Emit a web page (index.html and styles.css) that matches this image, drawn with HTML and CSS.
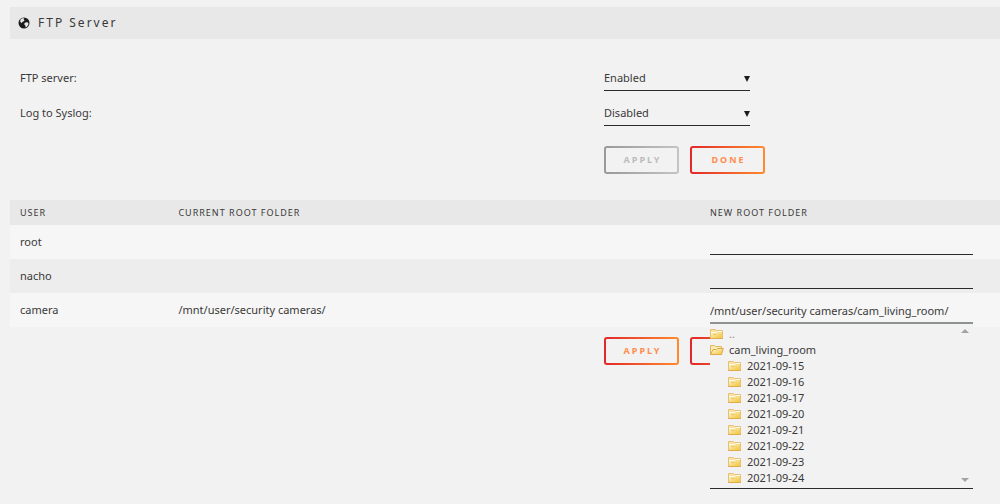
FILE: index.html
```html
<!DOCTYPE html>
<html lang="en">
<head>
    <meta charset="UTF-8">
    <meta name="viewport" content="width=device-width, initial-scale=1.0">
    <title>FTP Server</title>
    <link rel="stylesheet" href="styles.css">
</head>
<body>
    <svg class="sprites" aria-hidden="true">
        <defs>
            <linearGradient id="folderFill" x1="0" y1="0" x2="1" y2="1">
                <stop offset="0" stop-color="#fff6d0"/>
                <stop offset="1" stop-color="#f0c63c"/>
            </linearGradient>
        </defs>
        <symbol id="folder" viewBox="0 0 14 12">
            <path d="M0.5 1.5H5.5L6.5 2.5H12.5V10.5H0.5Z" fill="#f9e3a0" stroke="#e6c077"/>
            <path d="M1 4H6.5L7.5 3H12V10H1Z" fill="url(#folderFill)"/>
            <path d="M1 4.5H6.5L7.5 3.5H12" fill="none" stroke="#fffbe8"/>
            <path d="M3 6.5H6.5" stroke="#ecc46a"/>
            <path d="M0 10.5H13" stroke="#e3ab4c"/>
        </symbol>
        <symbol id="folder-open" viewBox="0 0 14 12">
            <path d="M0.5 10V1.5H4.5L5.5 2.5H11.5V10.5H0.5Z" fill="#fbecb6" stroke="#e2b55a"/>
            <path d="M0.5 10.5L3 5.5H6.5L7.5 4.5H13.3L11.5 10.5Z" fill="url(#folderFill)" stroke="#dfa94a"/>
        </symbol>
    </svg>

    <main class="page">
        <h1 class="title">
            <svg class="globe" viewBox="0 0 12 12" aria-hidden="true">
                <circle cx="6" cy="6" r="5.5" fill="#1c1b1b"/>
                <path d="M2.4 2.4L4.4 1.2L6.4 1.3L5.6 2.5L6.6 3.2L5.4 4.6L4 5L4.2 6L3 5.8L2.2 4.6Z" fill="#e8e8e8"/>
                <path d="M6.4 6.2L8 5.2L10 5.6L10.6 7L9.2 9.4L7.6 10.4L7.4 8.6L6.4 7.8Z" fill="#e8e8e8"/>
            </svg>
            FTP Server
        </h1>

        <form class="settings">
            <div class="field">
                <label for="ftpServer">FTP server:</label>
                <div class="select">
                    <select id="ftpServer">
                        <option selected>Enabled</option>
                        <option>Disabled</option>
                    </select>
                </div>
            </div>
            <div class="field">
                <label for="syslog">Log to Syslog:</label>
                <div class="select">
                    <select id="syslog">
                        <option>Enabled</option>
                        <option selected>Disabled</option>
                    </select>
                </div>
            </div>
            <div class="actions">
                <button type="submit" class="btn" disabled>Apply</button>
                <button type="button" class="btn">Done</button>
            </div>
        </form>

        <form class="folders">
            <table class="users">
                <thead>
                    <tr>
                        <th class="col-user">User</th>
                        <th class="col-current">Current root folder</th>
                        <th>New root folder</th>
                    </tr>
                </thead>
                <tbody>
                    <tr>
                        <td>root</td>
                        <td></td>
                        <td><input type="text" class="path" aria-label="New root folder for root"></td>
                    </tr>
                    <tr>
                        <td>nacho</td>
                        <td></td>
                        <td><input type="text" class="path" aria-label="New root folder for nacho"></td>
                    </tr>
                    <tr>
                        <td>camera</td>
                        <td>/mnt/user/security cameras/</td>
                        <td>
                            <div class="picker">
                                <input type="text" class="path active" aria-label="New root folder for camera" value="/mnt/user/security cameras/cam_living_room/">
                                <div class="tree">
                                    <ul>
                                        <li><svg><use href="#folder"/></svg><a class="up" href="#">..</a></li>
                                        <li><svg><use href="#folder-open"/></svg><a href="#">cam_living_room</a></li>
                                    </ul>
                                    <ul class="children">
                                        <li><svg><use href="#folder"/></svg><a href="#">2021-09-15</a></li>
                                        <li><svg><use href="#folder"/></svg><a href="#">2021-09-16</a></li>
                                        <li><svg><use href="#folder"/></svg><a href="#">2021-09-17</a></li>
                                        <li><svg><use href="#folder"/></svg><a href="#">2021-09-20</a></li>
                                        <li><svg><use href="#folder"/></svg><a href="#">2021-09-21</a></li>
                                        <li><svg><use href="#folder"/></svg><a href="#">2021-09-22</a></li>
                                        <li><svg><use href="#folder"/></svg><a href="#">2021-09-23</a></li>
                                        <li><svg><use href="#folder"/></svg><a href="#">2021-09-24</a></li>
                                    </ul>
                                </div>
                            </div>
                        </td>
                    </tr>
                </tbody>
            </table>
            <div class="actions">
                <button type="submit" class="btn">Apply</button>
                <button type="button" class="btn">Done</button>
            </div>
        </form>
    </main>
</body>
</html>
```
FILE: styles.css
```css
* {
    box-sizing: border-box;
}

body {
    margin: 0;
    background-color: #f2f2f2;
    color: #3a3938;
    font-family: "Noto Sans", sans-serif;
    font-size: 11px;
    line-height: 16px;
}

.sprites {
    position: absolute;
    width: 0;
    height: 0;
}

.page {
    min-height: 100vh;
    padding: 7px 0 0 10px;
}

.title {
    display: flex;
    align-items: center;
    gap: 8px;
    height: 32px;
    margin: 0;
    padding: 0 8px;
    background-color: #e8e8e8;
    font-size: 12px;
    font-weight: normal;
    letter-spacing: 2px;
}

.globe {
    width: 12px;
    height: 12px;
}

.settings {
    padding-top: 25px;
}

.field {
    display: flex;
    align-items: center;
    height: 27px;
    margin-bottom: 8px;
}

.field label {
    flex: 0 0 60%;
    padding-left: 10px;
}

.select {
    position: relative;
    width: 146px;
}

.select::after {
    content: "";
    position: absolute;
    top: 12px;
    right: 0;
    border: 3px solid transparent;
    border-top: 6px solid #1c1b1b;
    border-bottom: 0;
    pointer-events: none;
}

select,
.path {
    display: block;
    width: 100%;
    height: 27px;
    margin: 0;
    padding: 2px 0 0;
    border: 0;
    border-bottom: 1px solid #2b2a29;
    border-radius: 0;
    background: transparent;
    color: inherit;
    font: inherit;
    outline: 0;
    appearance: none;
}

.path {
    height: 26px;
}

.path.active {
    height: 28px;
    border-bottom: 2px solid #8f938f;
}

.actions {
    display: flex;
    gap: 11px;
    padding-left: 60%;
}

.settings .actions {
    padding-top: 12px;
}

.btn {
    width: 75px;
    height: 28px;
    padding: 0 0 0 2px;
    border: 2px solid transparent;
    border-radius: 3px;
    background: linear-gradient(#f2f2f2, #f2f2f2) padding-box, linear-gradient(90deg, #e22828, #ff8c2f) border-box;
    color: #ff8d4d;
    font: bold 9px/16px "Noto Sans", sans-serif;
    letter-spacing: 2px;
    text-transform: uppercase;
    cursor: pointer;
}

.btn:disabled {
    background: linear-gradient(#f2f2f2, #f2f2f2) padding-box, linear-gradient(90deg, #999, #c4c4c4) border-box;
    color: #bcbcbc;
    cursor: default;
}

.folders {
    padding-top: 26px;
}

.users {
    width: 100%;
    margin-bottom: 10px;
    border-collapse: collapse;
    table-layout: fixed;
}

.users th {
    height: 25px;
    padding: 0 0 0 10px;
    background-color: #e8e8e8;
    font-size: 9px;
    font-weight: normal;
    letter-spacing: 1px;
    text-align: left;
    text-transform: uppercase;
}

.users .col-user {
    width: 16%;
}

.users .col-current {
    width: 54%;
}

.users td {
    height: 34px;
    padding: 0 27px 0 10px;
    background-color: #f6f6f6;
}

.users tr:nth-child(even) td {
    background-color: #ededed;
}

.users th:last-child,
.users td:last-child {
    padding-left: 7px;
}

.picker {
    position: relative;
}

/* folder tree opens over the buttons below the table */
.tree {
    position: absolute;
    top: 100%;
    left: 0;
    z-index: 1;
    width: 100%;
    height: 165px;
    padding-top: 2px;
    border-bottom: 1px solid #2b2a29;
    background-color: #f2f2f2;
}

.tree::before,
.tree::after {
    content: "";
    position: absolute;
    right: 4px;
    border: 4px solid transparent;
}

.tree::before {
    top: 5px;
    border-top: 0;
    border-bottom-color: #a3a3a3;
}

.tree::after {
    bottom: 6px;
    border-bottom: 0;
    border-top-color: #a3a3a3;
}

.tree ul {
    margin: 0;
    padding: 0;
    list-style: none;
}

.tree .children {
    padding-left: 18px;
}

.tree li {
    display: flex;
    align-items: center;
    gap: 5px;
    height: 16px;
}

.tree svg {
    width: 14px;
    height: 12px;
}

.tree a {
    color: inherit;
    text-decoration: none;
}

.tree .up {
    color: #8f938f;
}
```
